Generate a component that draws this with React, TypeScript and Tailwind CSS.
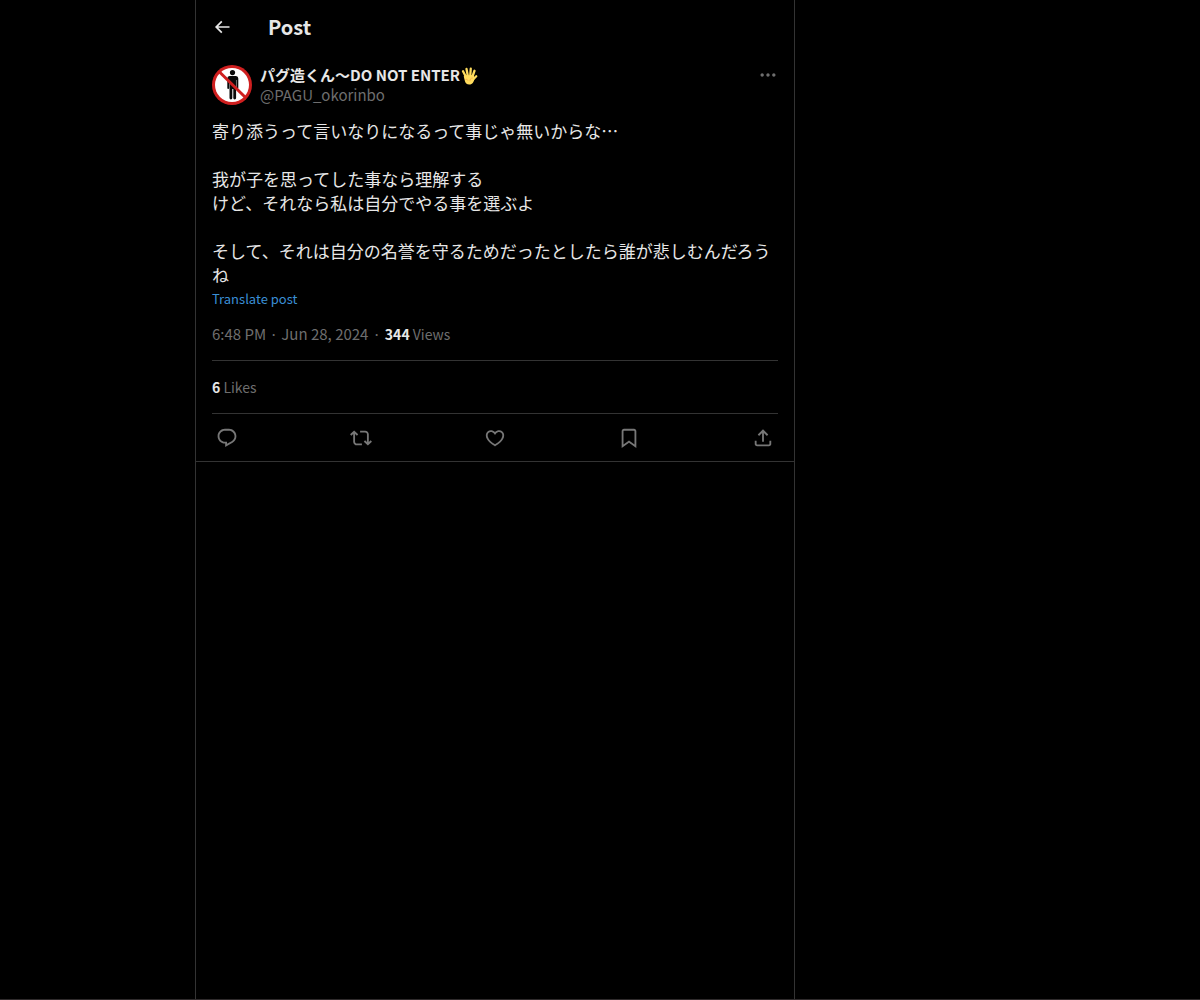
import React from 'react';

const iconPaths = {
  back: 'M7.414 13l5.043 5.04-1.414 1.42L3.586 12l7.457-7.46 1.414 1.42L7.414 11H21v2H7.414z',
  more: 'M3 12c0-1.1.9-2 2-2s2 .9 2 2-.9 2-2 2-2-.9-2-2zm9 2c1.1 0 2-.9 2-2s-.9-2-2-2-2 .9-2 2 .9 2 2 2zm7 0c1.1 0 2-.9 2-2s-.9-2-2-2-2 .9-2 2 .9 2 2 2z',
  reply: 'M1.751 10c0-4.42 3.584-8 8.005-8h4.366c4.49 0 8.129 3.64 8.129 8.13 0 2.96-1.607 5.68-4.196 7.11l-8.054 4.46v-3.69h-.067c-4.49.1-8.183-3.51-8.183-8.01zm8.005-6c-3.317 0-6.005 2.69-6.005 6 0 3.37 2.77 6.08 6.138 6.01l.351-.01h1.761v2.3l5.087-2.81c1.951-1.08 3.163-3.13 3.163-5.36 0-3.39-2.744-6.13-6.129-6.13H9.756z',
  repost: 'M4.5 3.88l4.432 4.14-1.364 1.46L5.5 7.55V16c0 1.1.896 2 2 2H13v2H7.5c-2.209 0-4-1.79-4-4V7.55L1.432 9.48.068 8.02 4.5 3.88zM16.5 6H11V4h5.5c2.209 0 4 1.79 4 4v8.45l2.068-1.93 1.364 1.46-4.432 4.14-4.432-4.14 1.364-1.46 2.068 1.93V8c0-1.1-.896-2-2-2z',
  like: 'M16.697 5.5c-1.222-.06-2.679.51-3.89 2.16l-.805 1.09-.806-1.09C9.984 6.01 8.526 5.44 7.304 5.5c-1.243.07-2.349.78-2.91 1.91-.552 1.12-.633 2.78.479 4.82 1.074 1.97 3.257 4.27 7.129 6.61 3.87-2.34 6.052-4.64 7.126-6.61 1.111-2.04 1.03-3.7.477-4.82-.561-1.13-1.666-1.84-2.908-1.91zm4.187 7.69c-1.351 2.48-4.001 5.12-8.379 7.67l-.503.3-.504-.3c-4.379-2.55-7.029-5.19-8.382-7.67-1.36-2.5-1.41-4.86-.514-6.67.887-1.79 2.647-2.91 4.601-3.01 1.651-.09 3.368.56 4.798 2.01 1.429-1.45 3.146-2.1 4.796-2.01 1.954.1 3.714 1.22 4.601 3.01.896 1.81.846 4.17-.514 6.67z',
  bookmark: 'M4 4.5C4 3.12 5.119 2 6.5 2h11C18.881 2 20 3.12 20 4.5v18.44l-8-5.71-8 5.71V4.5zM6.5 4c-.276 0-.5.22-.5.5v14.56l6-4.29 6 4.29V4.5c0-.28-.224-.5-.5-.5h-11z',
  share: 'M12 2.59l5.7 5.7-1.41 1.42L13 6.41V16h-2V6.41l-3.3 3.3-1.41-1.42L12 2.59zM21 15l-.02 3.51c0 1.38-1.12 2.49-2.5 2.49H5.5C4.11 21 3 19.88 3 18.5V15h2v3.5c0 .28.22.5.5.5h12.98c.28 0 .5-.22.5-.5L19 15h2z',
};

type IconName = keyof typeof iconPaths;

const Icon = ({ name, className }: { name: IconName; className: string }) => (
  <svg viewBox="0 0 24 24" fill="currentColor" aria-hidden="true" className={className}>
    <path d={iconPaths[name]} />
  </svg>
);

const Avatar = () => (
  <svg viewBox="0 0 40 40" role="img" aria-label="Avatar" className="h-10 w-10 shrink-0">
    <circle cx="20" cy="20" r="20" fill="#cf1f1f" />
    <circle cx="20" cy="20" r="17" fill="#fff" />
    <g fill="#0a0a0a">
      <circle cx="20.5" cy="7.6" r="2.6" />
      <path d="M17.5 11h6.500q2.300 0 2.300 2.500v9.500q0 1-.9 1t-.9-1v-8h-.4v18q0 1.400-1.400 1.400t-1.400-1.400v-9h-1v9q0 1.400-1.400 1.400t-1.400-1.400v-18h-.4v8q0 1-.9 1t-.9-1v-9.500q0-2.500 2.200-2.500z" />
    </g>
    <path d="M7 6.500l27 26.500" stroke="#cf1f1f" strokeWidth="3" />
  </svg>
);

const Hand = () => (
  <svg viewBox="0 0 36 36" role="img" aria-label="🖐" className="mt-0.5 h-[18px] w-[18px]">
    <g fill="none" stroke="#ffdc5d" strokeWidth="4.6" strokeLinecap="round">
      <path d="M11.5 19L6 8.500M15.500 17L13 4M20.500 17L21.500 3.500M25 19L29 7.500M24 27L32.500 18.500" />
    </g>
    <path d="M8.5 17l18-1 3 6c-2 8-4 13-11 13-5 0-8-3-9-8l-2-8z" fill="#ffdc5d" />
    <path d="M25.5 22c-4 0-6 3-5.500 6.500M11 25c2-1 4 0 5 2" fill="none" stroke="#ef9645" strokeWidth="1.2" />
  </svg>
);

const actions: { name: IconName; label: string }[] = [
  { name: 'reply', label: 'Reply' },
  { name: 'repost', label: 'Repost' },
  { name: 'like', label: 'Like' },
  { name: 'bookmark', label: 'Bookmark' },
  { name: 'share', label: 'Share post' },
];

const App: React.FC = () => {
  return (
    <div className="grid min-h-screen border-b border-[#2f2b2c] bg-black font-['Noto_Sans_CJK_JP',sans-serif] text-[15px] leading-5 text-[#e7e7e7] lg:grid-cols-[195fr_600px_405fr]">
      <main className="border-x border-[#333333] lg:col-start-2">
        <header className="flex h-[53px] items-center px-4">
          <button type="button" aria-label="Back" className="mr-9">
            <Icon name="back" className="h-5 w-5" />
          </button>
          <h1 className="text-xl leading-6 font-bold">Post</h1>
        </header>

        <article lang="ja" className="border-b border-[#333333] px-4 pt-3">
          <div className="flex items-start">
            <Avatar />
            <div className="ml-2 min-w-0 flex-1">
              <a href="#profile" className="flex items-center font-bold">
                パグ造くん〜DO NOT ENTER
                <Hand />
              </a>
              <a href="#profile" className="block text-[#6e6e6e]">@PAGU_okorinbo</a>
            </div>
            <button type="button" aria-label="More" className="text-[#6e6e6e]">
              <Icon name="more" className="h-5 w-5" />
            </button>
          </div>

          <p className="mt-3.5 text-[17px] leading-6 whitespace-pre-line">
            {`寄り添うって言いなりになるって事じゃ無いからな…

            我が子を思ってした事なら理解する
            けど、それなら私は自分でやる事を選ぶよ

            そして、それは自分の名誉を守るためだったとしたら誰が悲しむんだろうね`}
          </p>
          <button type="button" className="block text-[13px] leading-6 text-[#3a8fd6]">Translate post</button>

          <div className="mt-[13px] mb-4 flex gap-1 text-[#6e6e6e]">
            <a href="#post">6:48 PM · Jun 28, 2024</a>
            <span>·</span>
            <span className="text-sm leading-5"><b className="text-[#e7e7e7]">344</b> Views</span>
          </div>

          <div className="border-y border-[#333333] py-4 text-sm text-[#6e6e6e]">
            <a href="#likes"><b className="text-[#e7e7e7]">6</b> Likes</a>
          </div>

          <div className="flex h-[47px] items-center justify-between text-[#777777]">
            {actions.map(({ name, label }) => (
              <button key={name} type="button" aria-label={label} className="px-1">
                <Icon name={name} className="h-[22px] w-[22px]" />
              </button>
            ))}
          </div>
        </article>
      </main>
    </div>
  );
};

export default App;
